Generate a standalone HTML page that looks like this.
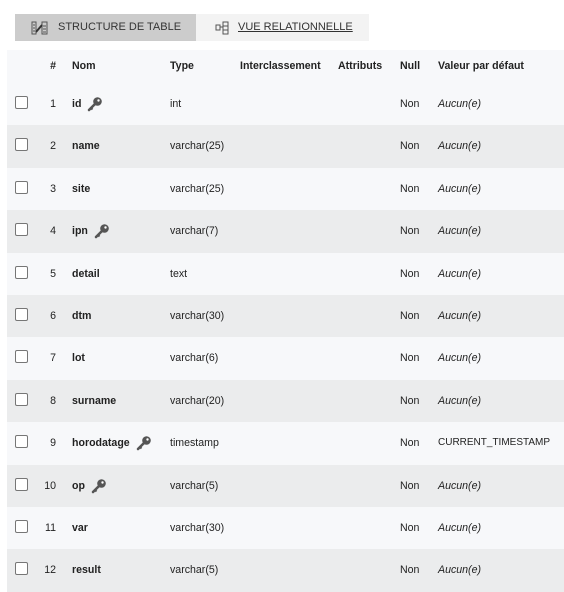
<!DOCTYPE html>
<html><head><meta charset="utf-8"><style>
body{margin:0;background:#fff;font-family:"Liberation Sans",sans-serif;font-size:10.6px;color:#222;width:564px;height:589px;overflow:hidden;position:relative}
.tab{position:absolute;top:14px;height:27px;line-height:27px;font-size:11px;color:#333}
.t1{left:15px;width:181px;background:#cccccc}
.t2{left:196px;width:173px;background:#f3f3f3}
.t2 span{text-decoration:underline}
.row{position:absolute;left:7px;width:557px;height:43px}
.row div{position:absolute;top:0;line-height:42px;white-space:nowrap}
.hd div{font-weight:bold;line-height:33px}
.cb{position:absolute;left:8px;top:13px;width:11px;height:11px;border:1px solid #767676;border-radius:2px;background:#fff}
.n{left:30px;width:19px;text-align:right}
.nm{left:65px;font-weight:bold}
.ty{left:163px}
.nu{left:393px}
.va{left:431px;font-style:italic}
.key{display:inline-block;vertical-align:middle;margin-left:6px}
</style></head><body>
<div class="tab t1"><svg style="position:absolute;left:16px;top:7px" width="17" height="14" viewBox="0 0 17 14"><rect x="1" y="1" width="4" height="12" fill="none" stroke="#555"/><rect x="11" y="1" width="5" height="12" fill="none" stroke="#555"/><path d="M5 11 L11 4" stroke="#333" stroke-width="2"/><path d="M2 4h2M2 7h2M2 10h2M12 5h3M12 8h3M12 11h3" stroke="#555"/></svg><span style="position:absolute;left:43px">STRUCTURE DE TABLE</span></div>
<div class="tab t2"><svg style="position:absolute;left:19px;top:7px" width="14" height="14" viewBox="0 0 14 14"><rect x="1" y="4" width="4" height="5" fill="none" stroke="#555"/><rect x="8" y="1" width="5" height="12" fill="none" stroke="#555"/><path d="M5 6h3M8 5h5M8 9h5" stroke="#555"/></svg><span style="position:absolute;left:42px">VUE RELATIONNELLE</span></div>

<div class="row hd" style="top:50px;height:33px;background:#f7f8fa">
<div class="n" style="text-align:right">#</div><div class="nm">Nom</div><div class="ty">Type</div><div style="left:233px">Interclassement</div><div style="left:331px">Attributs</div><div class="nu">Null</div><div class="va" style="font-style:normal">Valeur par défaut</div>
</div>
<div id="rows"></div>
<script>
var d=[["id","int",1],["name","varchar(25)"],["site","varchar(25)"],["ipn","varchar(7)",1],["detail","text"],["dtm","varchar(30)"],["lot","varchar(6)"],["surname","varchar(20)"],["horodatage","timestamp",1,"CURRENT_TIMESTAMP"],["op","varchar(5)",1],["var","varchar(30)"],["result","varchar(5)"]];
var key='<svg class="key" width="16" height="16" viewBox="0 0 16 16"><circle cx="10.5" cy="5.5" r="4.3" fill="#555"/><circle cx="11.5" cy="4.5" r="1.2" fill="#fff"/><path d="M8 8 L2 14" stroke="#555" stroke-width="2.6" stroke-linecap="round"/><path d="M4 12l1.5 1.5" stroke="#555" stroke-width="2"/></svg>';
var h='';d.forEach(function(r,i){h+='<div class="row" style="top:'+Math.round(83+i*42.4)+'px;background:'+(i%2?'#ebeced':'#f7f8fa')+'"><span class="cb"></span><div class="n">'+(i+1)+'</div><div class="nm">'+r[0]+(r[2]?key:'')+'</div><div class="ty">'+r[1]+'</div><div class="nu">Non</div><div class="va"'+(r[3]?' style="font-style:normal;font-size:10px"':'')+'>'+(r[3]||'Aucun(e)')+'</div></div>';});
document.getElementById('rows').innerHTML=h;
</script>
</body></html>
